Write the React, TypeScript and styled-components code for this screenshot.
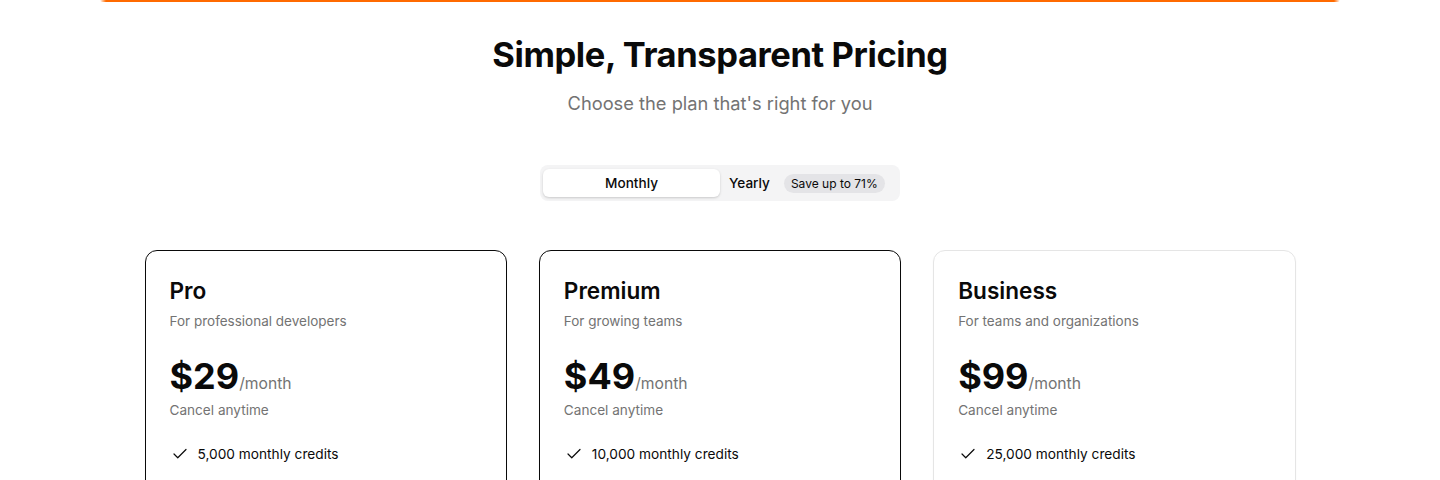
import React, { useState } from 'react';
import styled, { createGlobalStyle } from 'styled-components';
import { Check } from 'lucide-react';

// STYLES
const GlobalStyle = createGlobalStyle`
  body {
    margin: 0;
    background: #ffffff;
    font-family: Inter, "Noto Sans", sans-serif;
    color: #0a0a0a;
    -webkit-font-smoothing: antialiased;
  }
`;

const Page = styled.div`
  display: flex;
  flex-direction: column;
  align-items: center;
`;

const TopGlow = styled.div`
  width: 1240px;
  height: 2px;
  border-radius: 0 0 4px 4px;
  background: linear-gradient(
    90deg,
    rgba(255, 106, 0, 0) 0px,
    #ff6a00 6px,
    #ff6a00 calc(100% - 6px),
    rgba(255, 106, 0, 0) 100%
  );
`;

const Title = styled.h1`
  margin: 31px 0 0;
  font-size: 34.5px;
  line-height: 44px;
  font-weight: 700;
  letter-spacing: -0.4px;
`;

const Subtitle = styled.p`
  margin: 12px 0 0;
  font-size: 18.3px;
  line-height: 28px;
  color: #737373;
`;

const Toggle = styled.div`
  margin-top: 48px;
  display: flex;
  align-items: center;
  width: 360px;
  height: 36px;
  box-sizing: border-box;
  padding: 4px 3px;
  border-radius: 8px;
  background: #f4f4f5;
`;

const Tab = styled.button<{ $active?: boolean }>`
  border: none;
  font-family: inherit;
  font-size: 13.6px;
  font-weight: 500;
  color: #0a0a0a;
  cursor: pointer;
  display: flex;
  align-items: center;
  gap: 14px;
  height: 28px;
  padding: 0 9px;
  border-radius: 6px;
  background: ${(p) => (p.$active ? '#ffffff' : 'transparent')};
  box-shadow: ${(p) => (p.$active ? '0 1px 3px rgba(0,0,0,0.12), 0 1px 2px rgba(0,0,0,0.06)' : 'none')};
  justify-content: ${(p) => (p.$active ? 'center' : 'flex-start')};
  width: ${(p) => (p.$active ? '177px' : 'auto')};
`;

const Badge = styled.span`
  display: inline-flex;
  align-items: center;
  height: 19px;
  padding: 0 7px;
  border-radius: 999px;
  background: #e4e4e7;
  font-size: 12px;
  font-weight: 400;
`;

const Grid = styled.div`
  margin-top: 49px;
  width: 1151px;
  display: grid;
  grid-template-columns: repeat(3, 1fr);
  gap: 32px;
`;

const Card = styled.div<{ $highlight?: boolean }>`
  border: 1px solid ${(p) => (p.$highlight ? '#0a0a0a' : '#e5e5e5')};
  border-radius: 12px;
  padding: 26px 24px 24px;
  height: 320px;
  box-sizing: border-box;
  box-shadow: 0 1px 2px rgba(0, 0, 0, 0.04);
`;

const PlanName = styled.h3`
  margin: 0;
  font-size: 22.6px;
  line-height: 28px;
  font-weight: 600;
`;

const PlanDesc = styled.p`
  margin: 6px 0 0;
  font-size: 13.5px;
  line-height: 20px;
  color: #737373;
`;

const PriceRow = styled.div`
  margin-top: 23px;
  display: flex;
  align-items: baseline;
`;

const Price = styled.span`
  font-size: 36px;
  line-height: 44px;
  font-weight: 700;
`;

const Per = styled.span`
  font-size: 15.7px;
  color: #737373;
`;

const Note = styled.p`
  margin: 2px 0 0;
  font-size: 13.6px;
  line-height: 20px;
  color: #737373;
`;

const Features = styled.ul`
  list-style: none;
  margin: 24px 0 0;
  padding: 0;
  display: flex;
  flex-direction: column;
  gap: 12px;
`;

const Feature = styled.li`
  display: flex;
  align-items: center;
  gap: 9px;
  font-size: 13.7px;
  line-height: 20px;
`;

const CheckIcon = styled(Check)`
  flex-shrink: 0;
  margin-left: 1px;
`;

// DATA
const plans = [
  { name: 'Pro', desc: 'For professional developers', price: 29, features: ['5,000 monthly credits'], highlight: true },
  { name: 'Premium', desc: 'For growing teams', price: 49, features: ['10,000 monthly credits'], highlight: true },
  { name: 'Business', desc: 'For teams and organizations', price: 99, features: ['25,000 monthly credits'], highlight: false },
];

// COMPONENT
const App: React.FC = () => {
  const [yearly, setYearly] = useState(false);

  return (
    <>
      <GlobalStyle />
      <Page>
        <TopGlow />
        <Title>Simple, Transparent Pricing</Title>
        <Subtitle>Choose the plan that's right for you</Subtitle>

        <Toggle>
          <Tab $active={!yearly} onClick={() => setYearly(false)}>
            Monthly
          </Tab>
          <Tab $active={yearly} onClick={() => setYearly(true)}>
            Yearly
            <Badge>Save up to 71%</Badge>
          </Tab>
        </Toggle>

        <Grid>
          {plans.map((plan) => (
            <Card key={plan.name} $highlight={plan.highlight}>
              <PlanName>{plan.name}</PlanName>
              <PlanDesc>{plan.desc}</PlanDesc>
              <PriceRow>
                <Price>${plan.price}</Price>
                <Per>/month</Per>
              </PriceRow>
              <Note>Cancel anytime</Note>
              <Features>
                {plan.features.map((f) => (
                  <Feature key={f}>
                    <CheckIcon size={18} strokeWidth={1.6} />
                    {f}
                  </Feature>
                ))}
              </Features>
            </Card>
          ))}
        </Grid>
      </Page>
    </>
  );
};

export default App;
